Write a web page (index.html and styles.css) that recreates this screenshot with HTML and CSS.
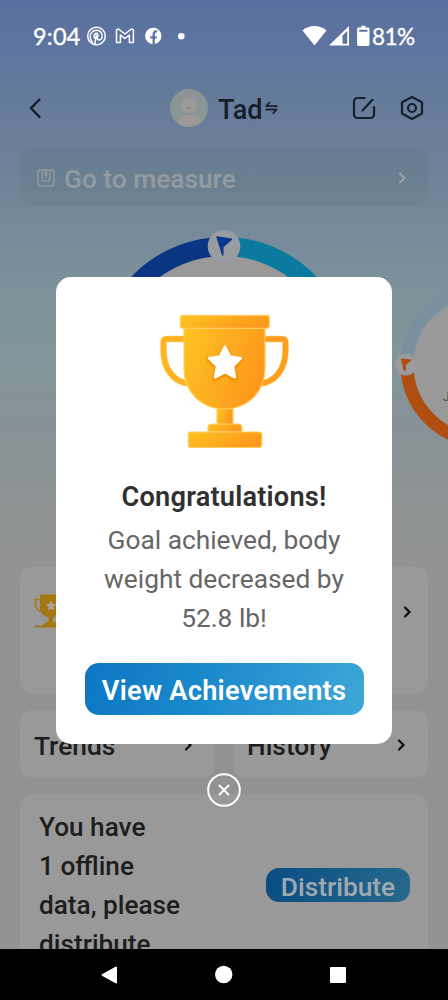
FILE: index.html
```
<!DOCTYPE html>
<html lang="en">
<head>
<meta charset="utf-8">
<title>Tad</title>
<link rel="stylesheet" href="styles.css">
</head>
<body>
<svg width="0" height="0" class="defs">
  <defs>
    <linearGradient id="gold" x1="0" y1="0" x2="1" y2=".35"><stop offset="0" stop-color="#fec421"/><stop offset=".5" stop-color="#fcaf20"/><stop offset="1" stop-color="#ff981c"/></linearGradient>
    <linearGradient id="goldDim" x1="0" x2="1"><stop offset="0" stop-color="#9b7417"/><stop offset="1" stop-color="#b27d09"/></linearGradient>
    <filter id="soft" x="-30%" y="-30%" width="160%" height="160%"><feGaussianBlur stdDeviation="1.3"/></filter>
  </defs>
</svg>
<div class="screen">
  <header class="status">
    <span class="clock">9:04</span>
    <svg class="notices" width="100" height="22" viewBox="0 0 100 22" fill="none" stroke="#fff">
      <circle cx="10.500" cy="11" r="8.800" stroke-width="1.500"/>
      <path d="M7 17.500C3.500 15 3.400 9.500 6 7c2.600-2.500 6.800-2.300 9 .2 2.300 2.700 1.200 7.800-1.900 7.900-1.700 0-2-1.400-1.500-3.200l.6-2.200M12.200 9.500c-.5-1.600-2.600-1.700-3.600-.3-1.200 1.800-.5 4.300 1 4.300 1.300 0 2-1.200 2.300-2.400M10.500 9.500l-1.800 9.800" stroke-width="1.500"/>
      <path d="M30.500 17.500v-12c0-1.500 1.700-1.800 2.600-1l5.800 4.500 5.800-4.500c.9-.8 2.700-.5 2.700 1v12h-4V10l-4.500 3.500-4.500-3.500v7.500z" stroke-width="1.500" stroke-linejoin="round"/>
      <circle cx="67.300" cy="11" r="8.200" fill="#fff" stroke="none"/>
      <path d="M67.700 19.500v-10.500c0-2 1-2.800 3.500-2.500M64.200 12.300h6.500" stroke="#5e74a0" stroke-width="2.300"/>
      <circle cx="95.300" cy="11.300" r="3.300" fill="#fff" stroke="none"/>
    </svg>
    <svg class="signals" width="68" height="22" viewBox="0 0 68 22" fill="#fff">
      <path d="M.5 5.500C7-.6 18-.6 24.500 5.500L12.500 20.500z"/>
      <path fill-rule="evenodd" d="M27 20.500 47 1v19.500zM40.500 10.500v8.200h4.700V6z"/>
      <path fill-rule="evenodd" d="M56.500 2.500h2.800V.8h4v1.700h2.800c.8 0 1.400.6 1.400 1.400v15.700c0 .8-.6 1.400-1.400 1.400H56.500c-.8 0-1.400-.6-1.400-1.400V3.900c0-.8.6-1.400 1.400-1.400zM57.200 4.700v2.100h8.200V4.700z"/>
    </svg>
    <span class="charge">81%</span>
  </header>

  <nav class="top">
    <svg class="back" width="14" height="22" viewBox="0 0 14 22"><path d="M11.500 2.500 3 11.200 11.500 20" fill="none" stroke="#151f2b" stroke-width="2.400" stroke-linecap="round" stroke-linejoin="round"/></svg>
    <svg class="avatar" width="38" height="38" viewBox="0 0 38 38"><circle cx="19" cy="19" r="19" fill="#8b9595"/><path d="M6.500 33C8 28 13 26 19 26s11 2 12.500 7C24 39.500 14 39.500 6.500 33z" fill="#9c9997"/><circle cx="19" cy="16.500" r="7.500" fill="#9c9c99"/><path d="M16 18.500a3.200 3.200 0 0 0 6 0z" fill="#858b89"/></svg>
    <span class="name">Tad</span>
    <svg class="swap" width="13" height="14" viewBox="0 0 13 14" fill="none" stroke="#182230" stroke-width="1.800" stroke-linecap="round" stroke-linejoin="round"><path d="M4.500 1.500 1.200 5.200h10.500M1.200 8.500h10.500L8.300 12.200"/></svg>
    <svg class="edit" width="24" height="24" viewBox="0 0 24 24" fill="none" stroke="#16202d" stroke-width="2.200" stroke-linecap="round"><path d="M12.500 2H5.500A3.500 3.500 0 0 0 2 5.500v13A3.500 3.500 0 0 0 5.500 22h13A3.500 3.500 0 0 0 22 18.500V11M10.500 14.500 20.500 3.800"/></svg>
    <svg class="gear" width="24" height="26" viewBox="0 0 24 26" fill="none" stroke="#16202d" stroke-width="2.200" stroke-linejoin="round"><path d="M12 2 22 7.200v11.300L12 24 2 18.500V7.200z"/><circle cx="12" cy="13" r="4"/></svg>
  </nav>

  <section class="measure">
    <svg width="18" height="18" viewBox="0 0 18 18" fill="none" stroke="#8f999d" stroke-width="1.500"><rect x=".9" y=".9" width="16" height="16" rx="2.500"/><path d="M5.300 1v9.500a1.500 1.500 0 0 0 1.500 1.500h4.400a1.500 1.500 0 0 0 1.500-1.500V1"/><path d="M9 2.500v5" stroke-width="3"/></svg>
    <span>Go to measure</span>
    <svg class="chev" width="9" height="14" viewBox="0 0 9 14"><path d="M2 2.500 6.500 7 2 11.500" fill="none" stroke="#9da4a6" stroke-width="2" stroke-linecap="round"/></svg>
  </section>

  <svg class="dials" width="448" height="361" viewBox="0 206 448 361">
    <circle cx="224" cy="365" r="110" fill="#999"/>
    <g fill="none" stroke-width="19">
      <path d="M105.500 365A118.500 118.500 0 0 1 224 246.500" stroke="#093582"/>
      <path d="M224 246.500A118.500 118.500 0 0 1 342.500 365" stroke="#0c799f"/>
    </g>
    <circle cx="224" cy="246.300" r="16.300" fill="#999ca1"/>
    <path d="M217 237l14.500 2.200-8.700 7.800 0 8z" fill="#09398c" stroke="#09398c" stroke-width="1.500" stroke-linejoin="round"/>
    <circle cx="483" cy="365" r="70" fill="#999"/>
    <circle cx="483" cy="365" r="76" fill="none" stroke="#7a909e" stroke-width="13"/>
    <path d="M407 365a76 76 0 0 0 76 76" fill="none" stroke="#b04d11" stroke-width="13"/>
    <circle cx="406" cy="364.500" r="11" fill="#999b9d"/>
    <path d="M401.500 358.800l9.600 1.300-5.800 5 .4 5-1.700.3z" fill="#b04d11" stroke="#b04d11" stroke-linejoin="round"/>
    <text x="442.500" y="401" class="date">J</text>
  </svg>

  <main class="cards">
    <section class="card award">
      <svg width="34" height="36" viewBox="0 0 34 36"><path d="M7 6.500H1.500v5c0 4 3 6.500 6.500 7M27 6.500h5.500v5c0 4-3 6.500-6.500 7" fill="none" stroke="#a97a0e" stroke-width="1.600"/><path d="M6 1.500h22V14c0 6-4 9.500-9 10v4l5 3.500v1h8v2H1v-2h8v-1l5.500-3.500v-4C9.500 23.500 6 20 6 14z" fill="url(#goldDim)"/><path d="m17 7.500 1.600 3.300 3.600.5-2.600 2.500.6 3.600-3.200-1.700-3.200 1.700.6-3.600-2.600-2.500 3.600-.5z" fill="#a9a498"/></svg>
      <svg class="chev" width="9" height="14" viewBox="0 0 9 14"><path d="M2 2.500 6.500 7 2 11.500" fill="none" stroke="#111" stroke-width="2.200" stroke-linecap="round"/></svg>
    </section>
    <div class="pair">
      <section class="card tile"><span>Trends</span><svg width="9" height="14" viewBox="0 0 9 14"><path d="M2 2.500 6.500 7 2 11.500" fill="none" stroke="#111" stroke-width="2.200" stroke-linecap="round"/></svg></section>
      <section class="card tile"><span>History</span><svg width="9" height="14" viewBox="0 0 9 14"><path d="M2 2.500 6.500 7 2 11.500" fill="none" stroke="#111" stroke-width="2.200" stroke-linecap="round"/></svg></section>
    </div>
    <section class="card offline">
      <p>You have<br>1 offline<br>data, please<br>distribute</p>
      <button class="distribute">Distribute</button>
    </section>
  </main>

  <footer class="android">
    <svg width="448" height="51" viewBox="0 0 448 51" fill="#fff" stroke="#fff" stroke-linejoin="round"><path d="M102.500 26 116 18.500v15z" stroke-width="2"/><circle cx="223.700" cy="25.500" r="8.700" stroke="none"/><rect x="331" y="19" width="14" height="14" stroke-width="2"/></svg>
  </footer>

  <div class="overlay">
    <section class="dialog">
      <svg class="cup" width="140" height="146" viewBox="154 308 140 146">
        <path d="M184 339h-17q-3.500 0-3.500 3.500v8c0 18 10 31 24 33M265 339h17q3.500 0 3.500 3.500v8c0 18-10 31-24 33" fill="none" stroke="#ffd36a" stroke-width="6.500"/>
        <path d="M184 339h-17q-3.500 0-3.500 3.500v8c0 18 10 31 24 33" fill="none" stroke="#feb323" stroke-width="5.300"/>
        <path d="M265 339h17q3.500 0 3.500 3.500v8c0 18-10 31-24 33" fill="none" stroke="#ff9d23" stroke-width="5.300"/>
        <g fill="url(#gold)" stroke="#ffcd60" stroke-width="1.200">
          <rect x="217" y="405" width="16" height="22"/>
          <path d="M184 326h81v42c0 25-18 41-40.500 41S184 393 184 368z"/>
          <rect x="180.300" y="315.300" width="89" height="13" rx="2.500"/>
          <path d="M208 432v-4q0-4 4-4h26q4 0 4 4v4z"/>
          <rect x="188.300" y="432" width="73.500" height="15.500" rx="2.500"/>
        </g>
        <path d="m225 347 5.500 10.500 12 1.800-8.500 8.500 2 12-11-5.500-11 5.500 2-12-8.500-8.500 12-1.800z" fill="#f09004" stroke="#f09004" stroke-width="3" stroke-linejoin="round" filter="url(#soft)"/>
        <path d="m225 346.500 5 10 11 1.700-8 7.900 1.900 11.200-9.900-5.200-9.900 5.200 1.900-11.200-8-7.900 11-1.700z" fill="#fff" stroke="#fff" stroke-width="2.500" stroke-linejoin="round"/>
      </svg>
      <h1>Congratulations!</h1>
      <p>Goal achieved, body<br>weight decreased by<br>52.8 lb!</p>
      <button class="view">View Achievements</button>
    </section>
    <svg class="close" width="36" height="36" viewBox="0 0 36 36" fill="none" stroke="#fff" stroke-width="2"><circle cx="18" cy="18" r="15.800"/><path d="m13.500 13.500 9 9m0-9-9 9" stroke-linecap="round"/></svg>
  </div>
</div>
</body>
</html>
```

FILE: styles.css
```
* { box-sizing: border-box; }
body { margin: 0; font-family: Roboto, "Liberation Sans", sans-serif; }
.defs { position: absolute; }
.screen {
  position: relative; width: 448px; height: 1000px; overflow: hidden;
  display: flex; flex-direction: column;
  background: linear-gradient(#5970a0 0, #5f76a0 60px, #647a9b 90px, #6a8099 150px, #74889a 215px, #7d929b 290px, #81949a 360px, #879195 430px, #8f9394 510px, #929292 580px);
}
svg { flex: none; display: block; }
p, h1 { margin: 0; }
button { border: 0; padding: 0; font-family: inherit; white-space: nowrap; }

.status { height: 72px; flex: none; display: flex; align-items: center; padding: 0 33px; color: #fff; font-family: Lato, sans-serif; font-size: 23.500px; font-weight: 400; }
.clock { width: 53px; letter-spacing: .2px; -webkit-text-stroke: .35px #fff; }
.signals { margin-left: 116px; }
.charge { margin-left: 2px; font-size: 22.500px; letter-spacing: -.5px; -webkit-text-stroke: .35px #fff; }

.top { height: 68px; margin-top: 2px; flex: none; display: flex; align-items: center; padding: 0 24px 0 28px; color: #151f2a; }
.avatar { margin-left: 128px; }
.name { margin: 3px 0 0 10px; width: 46px; font-size: 27px; font-weight: 500; }
.swap { margin-left: 1px; }
.edit { margin-left: auto; }
.gear { margin-left: 24px; }

.measure { flex: none; margin: 7px 20px 0; height: 57px; border-radius: 13px; background: linear-gradient(#667c92, #6d8291); display: flex; align-items: center; padding: 0 21px 0 17px; color: #929b9f; font-size: 26.300px; font-weight: 500; }
.measure span { margin: 2px 0 0 9px; }
.chev { margin-left: auto; }
.dials { overflow: hidden; }
.date { font: 13px Roboto, sans-serif; fill: #555; }

.cards { flex: 1; min-height: 0; overflow: hidden; padding: 0 20px; display: flex; flex-direction: column; gap: 16px; color: #1d1d1d; background: #929292; }
.card { flex: none; background: #999; border-radius: 13px; }
.award { height: 127px; display: flex; align-items: flex-start; padding: 26px 16px 0 14px; }
.award .chev { margin-top: 12px; }
.pair { flex: none; display: grid; grid-template-columns: 1fr 1fr; gap: 18px; }
.tile { height: 68px; display: flex; align-items: center; justify-content: space-between; padding: 1px 22px 0 14px; font-size: 26.300px; font-weight: 500; }
.tile span { margin-top: 2px; }
.offline { height: 210px; display: flex; justify-content: space-between; padding: 14px 18px 0 19px; font-size: 26.200px; line-height: 39px; font-weight: 500; }
.distribute { margin-top: 60px; width: 144px; height: 34px; border-radius: 13px; background: linear-gradient(100deg, #0a4d83, #27698b); color: #a0a9ae; font-size: 26.300px; line-height: 38px; font-weight: 500; }

.android { flex: none; height: 51px; background: #000; }

.overlay { position: absolute; inset: 277px 56px auto; display: flex; flex-direction: column; align-items: center; }
.dialog { width: 336px; height: 467px; background: #fff; border-radius: 15px; padding-top: 31px; display: flex; flex-direction: column; align-items: center; text-align: center; }
.dialog h1 { margin-top: 27px; font-size: 27.200px; letter-spacing: .2px; line-height: 32px; font-weight: 600; color: #303030; }
.dialog p { margin-top: 8px; font-size: 26.300px; line-height: 39px; color: #666; }
.view { margin-top: 25px; width: 279px; height: 52px; border-radius: 14px; background: linear-gradient(105deg, #0c76c3, #1c8bcd 45%, #3ea7d7); color: #fff; font-size: 27.200px; letter-spacing: .28px; font-weight: 600; line-height: 56px; }
.close { margin-top: 28px; }
```
